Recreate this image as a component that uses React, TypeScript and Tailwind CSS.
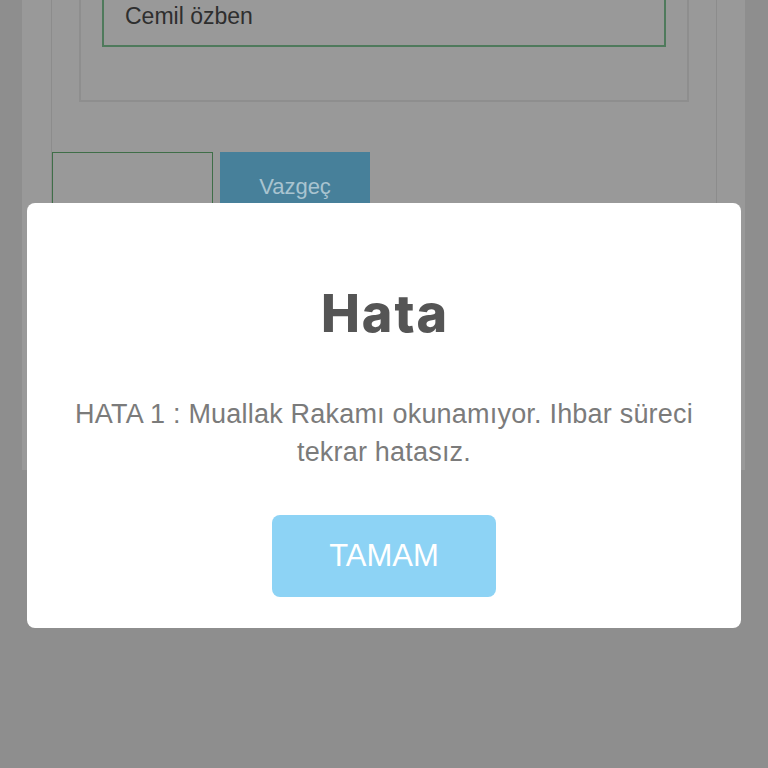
const sans = "font-['Liberation_Sans','Helvetica_Neue',Arial,sans-serif]";

function BackgroundForm() {
  return (
    <div className="ml-[22px] h-[470px] w-[723px] bg-[#999999]">
      <div className="ml-[29px] h-full w-[666px] border-x border-[#8c8c8c]">
        <div className="ml-[27px] w-[610px] h-[102px] border-x-2 border-b-2 border-[#8e8e8e] flex flex-col">
          <div className="mt-[-14px] mx-[21px] h-[61px] border-2 border-t-0 border-[#4f7a5c] flex items-end pb-[16px] pl-[21px]">
            <span className={`${sans} text-[23px] leading-[26px] text-[#2e2e2e]`}>Cemil özben</span>
          </div>
        </div>
        <div className="mt-[50px] flex gap-[7px]">
          <button className="h-[70px] w-[161px] border border-[#3f6e48]" />
          <button className={`${sans} h-[70px] w-[150px] bg-[#47809a] text-[22px] text-[#a9c4d0] flex justify-center pt-[18px]`}>
            Vazgeç
          </button>
        </div>
      </div>
    </div>
  );
}

function ErrorDialog() {
  return (
    <div className="absolute left-[27px] top-[203px] w-[714px] h-[425px] rounded-[8px] bg-white flex flex-col items-center">
      <h2 className="mt-[81px] pl-[2px] font-['Inter',sans-serif] text-[52px] leading-[60px] font-extrabold tracking-[2px] text-[#555555]">
        Hata
      </h2>
      <p className={`${sans} mt-[51px] px-[36px] text-center text-[27px] leading-[38px] tracking-[0.2px] text-[#7b7b7b]`}>
        HATA 1 : Muallak Rakamı okunamıyor. Ihbar süreci tekrar hatasız.
      </p>
      <button className={`${sans} mt-[44px] w-[224px] h-[82px] rounded-[8px] bg-[#8dd3f5] text-white text-[31px]`}>
        TAMAM
      </button>
    </div>
  );
}

export default function App() {
  return (
    <div className="relative w-[768px] h-[768px] overflow-hidden bg-[#8e8e8e]">
      <BackgroundForm />
      <ErrorDialog />
    </div>
  );
}
